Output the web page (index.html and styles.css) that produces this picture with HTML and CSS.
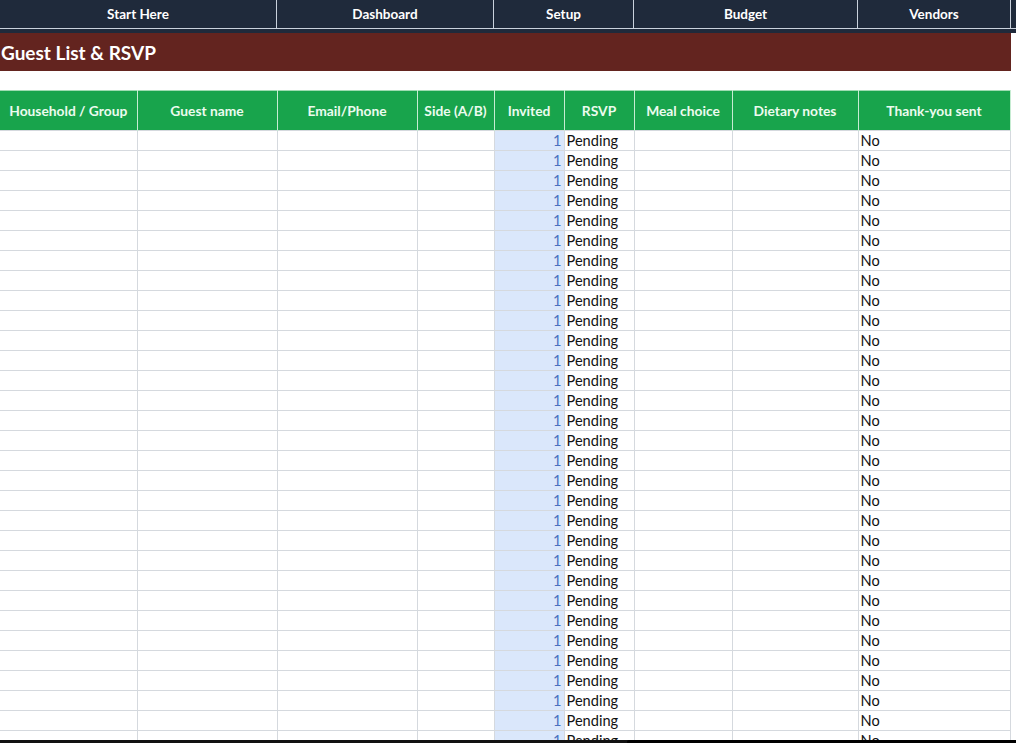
FILE: index.html
```html
<!DOCTYPE html>
<html>
<head>
  <meta charset="utf-8">
  <title>Guest List &amp; RSVP</title>
  <link rel="stylesheet" href="styles.css">
</head>
<body>
  <div class="sheet">
    <div class="nav">
      <div class="nav-item w-277">Start Here</div>
      <div class="nav-item w-217">Dashboard</div>
      <div class="nav-item w-140">Setup</div>
      <div class="nav-item w-224">Budget</div>
      <div class="nav-item w-152">Vendors</div>
      <div class="nav-rest"></div>
    </div>
    <div class="nav-gap"></div>

    <div class="title-row">
      <h1 class="title">Guest List &amp; RSVP</h1>
    </div>
    <div class="spacer"></div>

    <table class="grid">
      <colgroup>
        <col style="width:137px">
        <col style="width:140px">
        <col style="width:140px">
        <col style="width:77px">
        <col style="width:70px">
        <col style="width:70px">
        <col style="width:98px">
        <col style="width:126px">
        <col style="width:152px">
      </colgroup>
      <thead>
        <tr>
          <th>Household / Group</th>
          <th>Guest name</th>
          <th>Email/Phone</th>
          <th>Side (A/B)</th>
          <th>Invited</th>
          <th>RSVP</th>
          <th>Meal choice</th>
          <th>Dietary notes</th>
          <th>Thank-you sent</th>
        </tr>
      </thead>
      <tbody id="guestRows">
        <!-- rows are added by the script below -->
      </tbody>
    </table>
  </div>
  <div class="scrollbar"><div class="thumb"></div></div>

  <script>
    var tbody = document.getElementById('guestRows');
    for (var i = 0; i < 31; i++) {
      var row = document.createElement('tr');
      row.innerHTML =
        '<td></td><td></td><td></td><td></td>' +
        '<td class="invited">1</td>' +
        '<td>Pending</td><td></td><td></td>' +
        '<td>No</td>';
      tbody.appendChild(row);
    }
  </script>
</body>
</html>
```

FILE: styles.css
```css
html,
body {
  margin: 0;
  padding: 0;
  background-color: #fff;
  overflow: hidden;
}

body {
  font-family: Lato, "Open Sans", sans-serif;
  font-size: 14px;
  color: #111;
  width: 1016px;
  height: 743px;
}

.sheet {
  width: 1016px;
}

/* top navigation strip */
.nav {
  display: flex;
  height: 28px;
  background-color: #1f2a3b;
  border-bottom: 1px solid #c9d1dc;
}

.nav-item {
  display: flex;
  align-items: center;
  justify-content: center;
  box-sizing: border-box;
  color: #fff;
  font-weight: bold;
  font-size: 13.5px;
  border-right: 1px solid #c9d1dc;
}

.w-277 { width: 277px; }
.w-217 { width: 217px; }
.w-140 { width: 140px; }
.w-224 { width: 224px; }
.w-152 { width: 153px; }

.nav-rest {
  flex: 1;
}

.nav-gap {
  height: 4px;
  background-color: #1f2a3b;
}

/* title bar */
.title-row {
  width: 1011px;
  height: 38px;
  background-color: #63241f;
  display: flex;
  align-items: center;
}

.title {
  margin: 0;
  padding-left: 1px;
  font-size: 19px;
  font-weight: bold;
  color: #fff;
}

.spacer {
  height: 19px;
}

/* guest table */
.grid {
  border-collapse: collapse;
  table-layout: fixed;
  width: 1010px;
}

.grid th {
  height: 39px;
  padding: 0;
  background-color: #18a44c;
  color: #ecfbef;
  font-size: 13.8px;
  font-weight: bold;
  text-align: center;
  border-top: 1px solid #9fdcb2;
  border-left: 1px solid #c6ecd2;
  border-right: 1px solid #c6ecd2;
}

.grid th:first-child {
  border-left: none;
}

.grid td {
  height: 19px;
  padding: 1px 2px 0;
  box-sizing: border-box;
  border: 1px solid #d5d9de;
  font-size: 14.6px;
  line-height: 18px;
  white-space: nowrap;
  overflow: hidden;
}

.grid td:first-child {
  border-left: none;
}

.grid td.invited {
  background-color: #dae7fb;
  color: #4a70c0;
  text-align: right;
}

/* bottom scroll bar overlay */
.scrollbar {
  position: fixed;
  left: 0;
  bottom: 0;
  width: 1016px;
  height: 3px;
  background-color: #111;
}

.thumb {
  position: absolute;
  left: 627px;
  top: 0;
  width: 389px;
  height: 3px;
  background-color: #000;
  border-radius: 2px 0 0 0;
}
```
